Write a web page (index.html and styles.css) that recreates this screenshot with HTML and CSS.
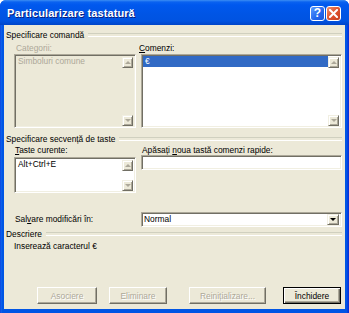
FILE: index.html
```html
<!DOCTYPE html>
<html lang="ro">
<head>
<meta charset="utf-8">
<title>Particularizare tastatură</title>
<link rel="stylesheet" href="styles.css">
</head>
<body>
<div class="window">
  <div class="titlebar">
    <span class="title">Particularizare tastatură</span>
    <div class="tb-btns">
      <div class="tb-btn help">?</div>
      <div class="tb-btn close">
        <svg width="9" height="9" viewBox="0 0 9 9"><path d="M1 1 L8 8 M8 1 L1 8" stroke="#fff" stroke-width="2" stroke-linecap="square"/></svg>
      </div>
    </div>
  </div>
  <div class="client">
    <div class="group-hdr"><span>Specificare comandă</span></div>
    <div class="cols cmd">
      <div class="col left">
        <div class="lbl dis">Categorii:</div>
        <div class="sunken listbox lb-dis">
          <div class="items"><div class="item dis-text">Simboluri comune</div></div>
          <div class="vscroll"><div class="sbtn"><i class="up"></i></div><div class="sbtn"><i class="down"></i></div></div>
        </div>
      </div>
      <div class="col right">
        <div class="lbl"><u>C</u>omenzi:</div>
        <div class="sunken listbox">
          <div class="items"><div class="item sel">€</div></div>
          <div class="vscroll"><div class="sbtn"><i class="up"></i></div><div class="sbtn"><i class="down"></i></div></div>
        </div>
      </div>
    </div>
    <div class="group-hdr hdr2"><span>Specificare secvență de taste</span></div>
    <div class="cols keys">
      <div class="col left">
        <div class="lbl"><u>T</u>aste curente:</div>
        <div class="sunken listbox tastebox">
          <div class="items"><div class="item">Alt+Ctrl+E</div></div>
          <div class="vscroll short"><div class="sbtn"><i class="up"></i></div><div class="sbtn"><i class="down"></i></div></div>
        </div>
      </div>
      <div class="col right">
        <div class="lbl">Apăsați <u>n</u>oua tastă comenzi rapide:</div>
        <div class="sunken textbox"></div>
      </div>
    </div>
    <div class="cols save">
      <div class="col left"><div class="lbl">Sal<u>v</u>are modificări în:</div></div>
      <div class="col right">
        <div class="sunken select"><span class="sel-text">Normal</span><div class="sbtn dd"><i class="down dark"></i></div></div>
      </div>
    </div>
    <div class="group-hdr hdr3"><span>Descriere</span></div>
    <div class="desc">Inserează caracterul €</div>
    <div class="buttons">
      <div class="btn disabled b1">Asociere</div>
      <div class="btn disabled b2">Eliminare</div>
      <div class="btn disabled b3">Reinițializare...</div>
      <div class="btn default b4">Închidere</div>
    </div>
  </div>
</div>
</body>
</html>
```
FILE: styles.css
```css
* { box-sizing: border-box; }
html, body { margin: 0; padding: 0; }
body {
  width: 349px;
  height: 313px;
  overflow: hidden;
  font-family: "Liberation Sans", Arial, sans-serif;
  font-size: 8.4px;
  color: #000;
  background: #fff;
}
.window {
  width: 349px;
  height: 313px;
  display: flex;
  flex-direction: column;
  border-radius: 6px 6px 0 0;
  background: linear-gradient(to right, #0831D9 0, #166AEE 1px, #0055E5 2px, #0055E5 347px, #0831D9 348px);
}
.titlebar {
  height: 25px;
  flex: none;
  display: flex;
  align-items: center;
  justify-content: space-between;
  padding: 0 8px 1px 7px;
  background: linear-gradient(#3C8EF3 0, #0A62F0 2px, #0058EE 5px, #0055E5 14px, #0053E1 21px, #0045C8 25px);
  border-radius: 6px 6px 0 0;
}
.title {
  color: #fff;
  font-weight: bold;
  font-size: 11px;
  letter-spacing: 0.1px;
  text-shadow: 1px 1px 0 #0A1E80;
  margin-top: 1px;
}
.tb-btns { display: flex; gap: 1px; margin-top: 2px; }
.tb-btn {
  width: 15px;
  height: 15px;
  border: 1px solid #fff;
  border-radius: 3px;
  display: flex;
  align-items: center;
  justify-content: center;
}
.help {
  background: linear-gradient(135deg, #5C9BFF 0, #2266EE 60%, #1A55D8 100%);
  color: #fff;
  font-weight: bold;
  font-size: 12px;
  line-height: 13px;
}
.close {
  background: linear-gradient(135deg, #F0906C 0, #E0532F 50%, #C7401F 100%);
}
.client {
  flex: 1;
  margin: 0 4px 4px 4px;
  background: #ECE9D8;
  display: flex;
  flex-direction: column;
  padding: 0 3px 0 10px;
}
.group-hdr {
  display: flex;
  align-items: center;
  height: 11px;
  line-height: 11px;
  margin-left: -8px;
  margin-top: 5px;
  white-space: nowrap;
}
.group-hdr::after {
  content: "";
  flex: 1;
  margin-left: 4px;
  height: 2px;
  border-top: 1px solid #D0D0BF;
  border-bottom: 1px solid #fff;
  margin-top: -2px;
}
.hdr2 { margin-top: 6px; }
.hdr3 { margin-top: 2px; }
.cols { display: flex; gap: 5px; }
.col.left { width: 122px; flex: none; }
.col.right { flex: 1; min-width: 0; }
.lbl {
  height: 11px;
  line-height: 11px;
  padding-left: 2px;
  white-space: nowrap;
}
.cmd { margin-top: 2px; }
.cmd .col.right .lbl { padding-left: 0; margin-left: -2px; }
.dis, .dis-text { color: #ACA899; }
.sunken {
  border-style: solid;
  border-width: 1px;
  border-color: #ACA899 #fff #fff #ACA899;
  box-shadow: inset 1px 1px 0 #716F64, inset -1px -1px 0 #F1EFE2;
  background: #fff;
}
.listbox {
  height: 74px;
  display: flex;
  padding: 1px;
}
.lb-dis { background: #ECE9D8; }
.items { flex: 1; min-width: 0; }
.item {
  height: 11px;
  line-height: 11px;
  padding-left: 2px;
  white-space: nowrap;
}
.item.sel { background: #316AC5; color: #fff; }
.vscroll {
  width: 11px;
  flex: none;
  display: flex;
  flex-direction: column;
  justify-content: space-between;
  padding-top: 1px;
  margin-right: 1px;
}
.sbtn {
  width: 11px;
  height: 11px;
  background: #ECE9D8;
  border-style: solid;
  border-width: 1px;
  border-color: #F1EFE2 #716F64 #716F64 #F1EFE2;
  box-shadow: inset 1px 1px 0 #fff, inset -1px -1px 0 #ACA899;
  display: flex;
  align-items: center;
  justify-content: center;
}
.sbtn i { display: block; width: 0; height: 0; border-left: 3px solid transparent; border-right: 3px solid transparent; }
.sbtn i.up { border-bottom: 3px solid #ACA899; }
.sbtn i.down { border-top: 3px solid #ACA899; }
.sbtn i.down.dark { border-top-color: #000; }
.keys .col.left .lbl { padding-left: 1px; }
.keys .col.right .lbl { padding-left: 1px; }
.keys .lbl { height: 10px; line-height: 11px; }
.tastebox { height: 36px; margin-top: 2px; }
.tastebox .item { padding-left: 2px; }
.textbox { height: 15px; }
.save { margin-top: 19px; align-items: center; }
.save .lbl { padding-left: 1px; }
.select {
  height: 15px;
  display: flex;
  align-items: center;
  justify-content: space-between;
  padding: 1px 2px 1px 2px;
}
.sel-text { line-height: 11px; }
.sbtn.dd { width: 12px; height: 11px; }
.desc {
  margin-top: 1px;
  height: 11px;
  line-height: 11px;
  padding-left: 0;
  white-space: nowrap;
}
.buttons {
  margin-top: auto;
  margin-bottom: 5px;
  display: flex;
  margin-left: 23px;
}
.btn {
  height: 17px;
  display: flex;
  align-items: center;
  justify-content: center;
  background: #ECE9D8;
  border-style: solid;
  border-width: 1px;
  border-color: #fff #716F64 #716F64 #fff;
  box-shadow: inset -1px -1px 0 #ACA899;
  white-space: nowrap;
}
.btn.disabled { color: #ACA899; text-shadow: 1px 1px 0 #fff; }
.btn.default {
  border: 1px solid #000;
  box-shadow: inset 1px 1px 0 #fff, inset -1px -1px 0 #716F64, inset -2px -2px 0 #ACA899;
}
.b1 { width: 60px; }
.b2 { width: 58px; margin-left: 12px; }
.b3 { width: 77px; margin-left: 22px; }
.b4 { width: 58px; margin-left: 17px; }
```
